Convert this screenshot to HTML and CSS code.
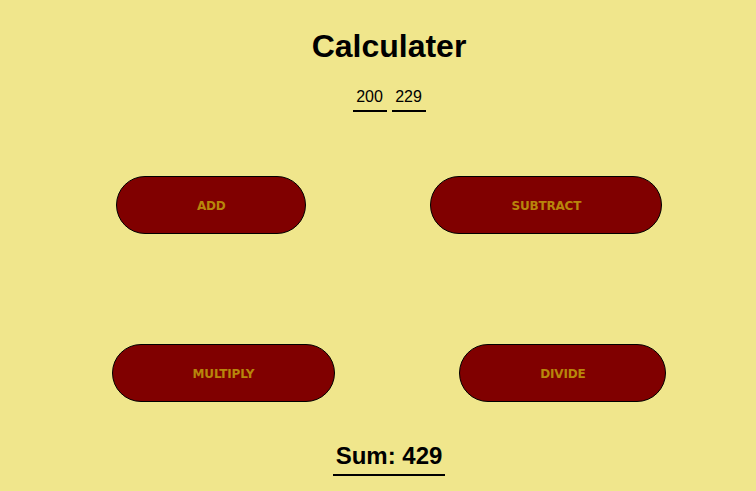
FILE: index.html
```html
<!DOCTYPE html>
<html>
<head>
<meta charset="utf-8">
<link rel="stylesheet" href="styles.css">
</head>
<body>
<div class="app">
  <h1 class="title">Calculater</h1>
  <div class="inputs">
    <input class="num" type="text" value="200">
    <input class="num" type="text" value="229">
  </div>
  <div class="row row-one">
    <button class="op">ADD</button>
    <button class="op">SUBTRACT</button>
  </div>
  <div class="row row-two">
    <button class="op">MULTIPLY</button>
    <button class="op">DIVIDE</button>
  </div>
  <div class="result"><span class="sum">Sum: 429</span></div>
</div>
</body>
</html>
```

FILE: styles.css
```css
html, body {
  margin: 0;
  padding: 0;
  background: #f0e68c;
}
body {
  font-family: "Liberation Sans", Arial, sans-serif;
  color: #000;
  height: 491px;
  overflow: hidden;
}
.app {
  display: flex;
  flex-direction: column;
  align-items: center;
  padding-left: 22px;
}
.title {
  margin: 28px 0 0;
  font-size: 32px;
  font-weight: bold;
  line-height: 37px;
}
.inputs {
  display: flex;
  gap: 5px;
  margin-top: 22px;
}
.num {
  width: 34px;
  box-sizing: border-box;
  border: none;
  border-bottom: 2px solid #000;
  background: transparent;
  font-family: "Liberation Sans", Arial, sans-serif;
  font-size: 16px;
  text-align: center;
  padding: 0 0 4px;
  height: 25px;
  outline: none;
  color: #000;
}
.row {
  display: flex;
  justify-content: center;
  gap: 124px;
  width: 100%;
}
.row-one {
  margin-top: 64px;
}
.row-two {
  margin-top: 110px;
}
.op {
  height: 58px;
  padding: 1px 80px 0;
  border: 1px solid #000;
  border-radius: 29px;
  background: #800000;
  color: #b8860b;
  font-family: "DejaVu Sans", sans-serif;
  font-weight: bold;
  font-size: 12px;
  letter-spacing: -0.2px;
  cursor: pointer;
}
.result {
  margin-top: 40px;
}
.sum {
  display: inline-block;
  font-size: 24px;
  font-weight: bold;
  line-height: 28px;
  padding: 0 3px 4px;
  border-bottom: 2px solid #000;
}
```
